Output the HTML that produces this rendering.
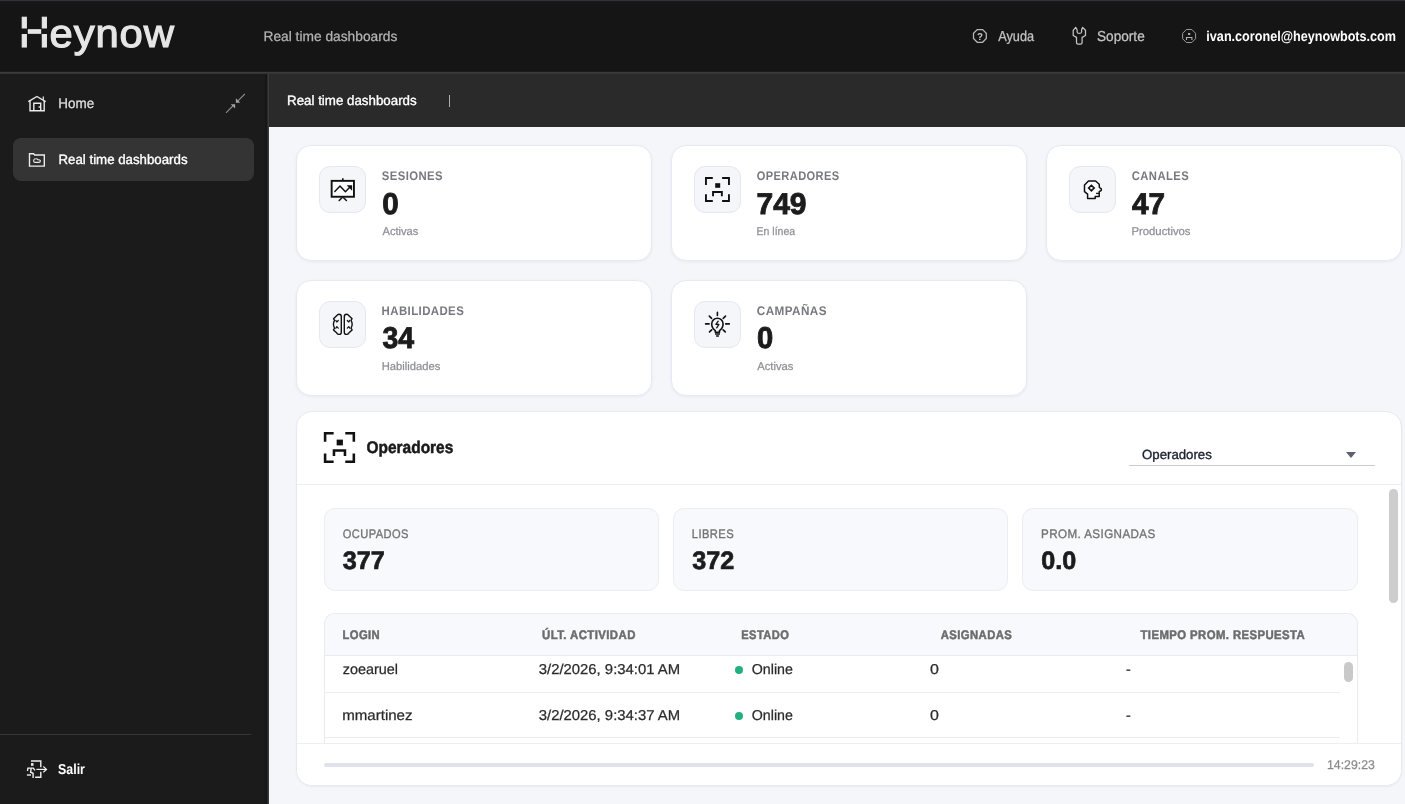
<!DOCTYPE html>
<html lang="es">
<head>
<meta charset="utf-8">
<title>Heynow - Real time dashboards</title>
<style>
*{box-sizing:border-box;margin:0;padding:0}
html,body{width:1405px;height:804px;overflow:hidden;background:#f5f6fa;font-family:"Liberation Sans",sans-serif}
.a,.t{position:absolute}
.t{white-space:nowrap;line-height:1;transform-origin:0 50%;text-rendering:geometricPrecision}
#page{position:absolute;left:0;top:0;width:1405px;height:804px;will-change:transform}
svg{position:absolute;overflow:visible}
#top{left:0;top:0;width:1405px;height:74px;background:#151515;border-top:1px solid #323136;box-shadow:inset 0 1px 0 #1c1b1f}
#topline{left:0;top:71px;width:1405px;height:3px;background:linear-gradient(to bottom,#1c1c1c 0,#1c1c1c 33%,#3b3b3b 34%,#3b3b3b 66%,#333 67%,#333 100%)}
#side{left:0;top:74px;width:269px;height:730px;background:#1b1b1b;border-right:1px solid #3a3a3a;box-shadow:inset -1px 0 0 #2a2a2a,inset -3px 0 0 #171717}
#tabs{left:269px;top:74px;width:1136px;height:52.700px;background:#2a2a2a}
.card{background:#fff;border:1px solid #e7e9f1;border-radius:15px;width:356px;height:116px;box-shadow:0 1px 3px rgba(30,30,60,.06)}
.ico{width:47px;height:47px;border-radius:11px;background:#f5f6fa;border:1px solid #e6e8f1}
#panel{left:296px;top:411px;width:1106px;height:375px;background:#fff;border:1px solid #e7e9f1;border-radius:16px;box-shadow:0 1px 2px rgba(30,30,60,.05)}
.mini{top:508px;width:335px;height:83px;background:#f8f9fc;border:1px solid #ebedf3;border-radius:11px}
.hl{height:1px;background:#eceef3}
.dot{width:8px;height:8px;border-radius:50%;background:#22b07d}
</style>
</head>
<body>
<div id="page">
<header class="a" id="top"></header><div class="a" id="topline"></div>
<span class="t" id="logo" style="left:18px;top:12px;font-size:39.6px;color:#e6e6e6;-webkit-text-stroke:1.1px currentColor;letter-spacing:.8px;transform:translate(0.86px,0.40px) scaleX(1.0573);"><span style="font-size:43.2px;display:inline-block;transform:scaleX(.945);transform-origin:0 50%;margin-right:-3px">H</span>eynow</span>
<span class="t" id="toptitle" style="left:263px;top:30px;font-size:13.8px;color:#b4b4b4;-webkit-text-stroke:.25px currentColor;transform:translate(0.50px,0.00px) scaleX(0.9970);">Real time dashboards</span>
<span class="t" id="ayuda" style="left:998px;top:29px;font-size:14.4px;color:#c4c4c4;-webkit-text-stroke:.25px currentColor;transform:translate(0.24px,0.90px) scaleX(0.8847);">Ayuda</span>
<span class="t" id="soporte" style="left:1097px;top:29px;font-size:14.4px;color:#c4c4c4;-webkit-text-stroke:.25px currentColor;transform:translate(0.03px,0.90px) scaleX(0.9462);">Soporte</span>
<span class="t" id="email" style="left:1206px;top:30px;font-size:14.2px;color:#ffffff;font-weight:700;transform:translate(0.35px,0.10px) scaleX(0.8894);">ivan.coronel@heynowbots.com</span>

<nav class="a" id="side"></nav>
<span class="t" id="home" style="left:58px;top:97px;font-size:13.9px;color:#e0e0e0;-webkit-text-stroke:.25px currentColor;transform:translate(0.28px,0.30px) scaleX(0.9679);">Home</span>
<div class="a" style="left:13.2px;top:137.8px;width:240.6px;height:43.1px;border-radius:8px;background:#343434"></div>
<span class="t" id="sidertd" style="left:58px;top:152px;font-size:13.5px;color:#ffffff;-webkit-text-stroke:.35px currentColor;transform:translate(0.52px,0.60px) scaleX(0.9823);">Real time dashboards</span>
<div class="a" style="left:0;top:733.8px;width:251px;height:1px;background:#353535"></div>
<span class="t" id="salir" style="left:58px;top:763px;font-size:14.4px;color:#ffffff;font-weight:700;transform:translate(0.05px,0.10px) scaleX(0.8603);">Salir</span>

<div class="a" id="tabs"></div>
<span class="t" id="tabrtd" style="left:287px;top:94px;font-size:13.5px;color:#ffffff;-webkit-text-stroke:.35px currentColor;transform:translate(0.01px,0.10px) scaleX(0.9873);">Real time dashboards</span>
<div class="a" style="left:448.6px;top:95px;width:1px;height:11.5px;background:#b0b0b0"></div>

<main>
<section class="a card" style="left:296px;top:145px"></section>
<div class="a ico" style="left:319px;top:166px"></div>
<span class="t" id="l1" style="left:381px;top:169px;font-size:12.5px;color:#78797f;font-weight:700;letter-spacing:.45px;transform:translate(0.79px,0.90px) scaleX(0.9057);">SESIONES</span><span class="t" id="n1" style="left:382px;top:189px;font-size:30.0px;color:#1c1c1c;font-weight:700;-webkit-text-stroke:.9px currentColor;transform:translate(0.25px,0.70px) scaleX(0.9869);">0</span><span class="t" id="s1" style="left:382px;top:227px;font-size:11.3px;color:#8e8f94;-webkit-text-stroke:.25px currentColor;transform:translate(0.50px,0.40px) scaleX(0.9848);">Activas</span>
<section class="a card" style="left:671px;top:145px"></section>
<div class="a ico" style="left:694px;top:166px"></div>
<span class="t" id="l2" style="left:756px;top:169px;font-size:12.5px;color:#78797f;font-weight:700;letter-spacing:.45px;transform:translate(0.78px,0.90px) scaleX(0.8862);">OPERADORES</span><span class="t" id="n2" style="left:756px;top:189px;font-size:30.0px;color:#1c1c1c;font-weight:700;-webkit-text-stroke:.9px currentColor;transform:translate(0.50px,0.70px) scaleX(0.9990);">749</span><span class="t" id="s2" style="left:756px;top:227px;font-size:11.3px;color:#8e8f94;-webkit-text-stroke:.25px currentColor;transform:translate(0.54px,0.40px) scaleX(0.9305);">En línea</span>
<section class="a card" style="left:1046px;top:145px"></section>
<div class="a ico" style="left:1069px;top:166px"></div>
<span class="t" id="l3" style="left:1131px;top:169px;font-size:12.5px;color:#78797f;font-weight:700;letter-spacing:.45px;transform:translate(0.78px,0.90px) scaleX(0.9008);">CANALES</span><span class="t" id="n3" style="left:1132px;top:189px;font-size:30.0px;color:#1c1c1c;font-weight:700;-webkit-text-stroke:.9px currentColor;transform:translate(0.00px,0.70px) scaleX(0.9879);">47</span><span class="t" id="s3" style="left:1131px;top:227px;font-size:11.3px;color:#8e8f94;-webkit-text-stroke:.25px currentColor;transform:translate(0.50px,0.40px) scaleX(1.0000);">Productivos</span>
<section class="a card" style="left:296px;top:280px"></section>
<div class="a ico" style="left:319px;top:301px"></div>
<span class="t" id="l4" style="left:381px;top:304px;font-size:12.5px;color:#78797f;font-weight:700;letter-spacing:.45px;transform:translate(0.56px,0.50px) scaleX(0.9144);">HABILIDADES</span><span class="t" id="n4" style="left:382px;top:324px;font-size:30.0px;color:#1c1c1c;font-weight:700;-webkit-text-stroke:.9px currentColor;transform:translate(0.51px,0.40px) scaleX(0.9482);">34</span><span class="t" id="s4" style="left:381px;top:362px;font-size:11.3px;color:#8e8f94;-webkit-text-stroke:.25px currentColor;transform:translate(0.75px,0.30px) scaleX(0.9931);">Habilidades</span>
<section class="a card" style="left:671px;top:280px"></section>
<div class="a ico" style="left:694px;top:301px"></div>
<span class="t" id="l5" style="left:756px;top:304px;font-size:12.5px;color:#78797f;font-weight:700;letter-spacing:.45px;transform:translate(0.77px,0.50px) scaleX(0.9376);">CAMPAÑAS</span><span class="t" id="n5" style="left:757px;top:324px;font-size:30.0px;color:#1c1c1c;font-weight:700;-webkit-text-stroke:.9px currentColor;transform:translate(0.00px,0.40px) scaleX(0.9739);">0</span><span class="t" id="s5" style="left:757px;top:362px;font-size:11.3px;color:#8e8f94;-webkit-text-stroke:.25px currentColor;transform:translate(0.25px,0.30px) scaleX(0.9931);">Activas</span>

<section class="a" id="panel"></section>
<span class="t" id="ptitle" style="left:366px;top:439px;font-size:17.0px;color:#1a1a1a;font-weight:700;-webkit-text-stroke:.5px currentColor;transform:translate(0.53px,0.00px) scaleX(0.9092);">Operadores</span>
<span class="t" id="ddl" style="left:1142px;top:448px;font-size:13.3px;color:#1c2030;-webkit-text-stroke:.35px currentColor;transform:translate(0.00px,0.10px) scaleX(0.9943);">Operadores</span>
<div class="a" style="left:1129px;top:465px;width:245.6px;height:1px;background:#cacdd8"></div>
<div class="a" style="left:1345.8px;top:452px;width:0;height:0;border-left:5.5px solid transparent;border-right:5.5px solid transparent;border-top:6px solid #5c6070"></div>
<div class="a hl" style="left:297px;top:484px;width:1104px"></div>
<div class="a" style="left:1389.2px;top:488.5px;width:8.7px;height:114.5px;border-radius:4.4px;background:#cdcdcd"></div>

<div class="a mini" style="left:324px"></div><span class="t" id="m1l" style="left:342px;top:527px;font-size:12.4px;color:#737373;-webkit-text-stroke:.35px currentColor;letter-spacing:.45px;transform:translate(0.78px,0.70px) scaleX(0.8972);">OCUPADOS</span><span class="t" id="m1n" style="left:342px;top:548px;font-size:25.2px;color:#1c1c1c;font-weight:700;-webkit-text-stroke:.7px currentColor;transform:translate(0.75px,0.80px) scaleX(1.0000);">377</span>
<div class="a mini" style="left:673px"></div><span class="t" id="m2l" style="left:691px;top:527px;font-size:12.4px;color:#737373;-webkit-text-stroke:.35px currentColor;letter-spacing:.45px;transform:translate(0.81px,0.70px) scaleX(0.9028);">LIBRES</span><span class="t" id="m2n" style="left:692px;top:548px;font-size:25.2px;color:#1c1c1c;font-weight:700;-webkit-text-stroke:.7px currentColor;transform:translate(0.25px,0.80px) scaleX(0.9988);">372</span>
<div class="a mini" style="left:1022px;width:336px"></div><span class="t" id="m3l" style="left:1041px;top:527px;font-size:12.4px;color:#737373;-webkit-text-stroke:.35px currentColor;letter-spacing:.45px;transform:translate(0.05px,0.70px) scaleX(0.9362);">PROM. ASIGNADAS</span><span class="t" id="m3n" style="left:1041px;top:548px;font-size:25.2px;color:#1c1c1c;font-weight:700;-webkit-text-stroke:.7px currentColor;transform:translate(0.25px,0.80px) scaleX(1.0001);">0.0</span>

<div class="a" style="left:324px;top:613px;width:1033.8px;height:131px;border:1px solid #e9ebf2;border-bottom:none;border-radius:11px 11px 0 0;background:#fff"></div>
<div class="a" style="left:325px;top:614px;width:1031.8px;height:41.5px;border-radius:10px 10px 0 0;background:#f8f9fc;border-bottom:1px solid #e9ebf2"></div>
<span class="t" id="h1" style="left:342px;top:628px;font-size:12.4px;color:#6c6c6c;font-weight:700;letter-spacing:.45px;-webkit-text-stroke:.5px currentColor;transform:translate(0.55px,0.70px) scaleX(0.9050);">LOGIN</span><span class="t" id="h2" style="left:542px;top:628px;font-size:12.4px;color:#6c6c6c;font-weight:700;letter-spacing:.45px;-webkit-text-stroke:.5px currentColor;transform:translate(0.03px,0.70px) scaleX(0.9193);">ÚLT. ACTIVIDAD</span><span class="t" id="h3" style="left:741px;top:628px;font-size:12.4px;color:#6c6c6c;font-weight:700;letter-spacing:.45px;-webkit-text-stroke:.5px currentColor;transform:translate(0.31px,0.70px) scaleX(0.8967);">ESTADO</span><span class="t" id="h4" style="left:940px;top:628px;font-size:12.4px;color:#6c6c6c;font-weight:700;letter-spacing:.45px;-webkit-text-stroke:.5px currentColor;transform:translate(0.74px,0.70px) scaleX(0.9115);">ASIGNADAS</span><span class="t" id="h5" style="left:1140px;top:628px;font-size:12.4px;color:#6c6c6c;font-weight:700;letter-spacing:.45px;-webkit-text-stroke:.5px currentColor;transform:translate(0.48px,0.70px) scaleX(0.9164);">TIEMPO PROM. RESPUESTA</span>
<span class="t" id="r1a" style="left:342px;top:663px;font-size:14.3px;color:#2b2b2b;-webkit-text-stroke:.25px currentColor;transform:translate(0.75px,0.30px) scaleX(1.0083);">zoearuel</span><span class="t" id="r1b" style="left:538px;top:663px;font-size:14.3px;color:#2b2b2b;-webkit-text-stroke:.25px currentColor;transform:translate(0.74px,0.20px) scaleX(1.0397);">3/2/2026, 9:34:01 AM</span><div class="a dot" style="left:734.7px;top:666.3px"></div><span class="t" id="r1c" style="left:751px;top:663px;font-size:14.3px;color:#2b2b2b;-webkit-text-stroke:.25px currentColor;transform:translate(0.75px,0.20px) scaleX(0.9951);">Online</span><span class="t" id="r1d" style="left:929px;top:663px;font-size:14.3px;color:#2b2b2b;-webkit-text-stroke:.25px currentColor;transform:translate(0.97px,0.30px) scaleX(1.1181);">0</span><span class="t" id="r1e" style="left:1125px;top:663px;font-size:14.3px;color:#2b2b2b;-webkit-text-stroke:.25px currentColor;transform:translate(0.99px,0.30px) scaleX(0.9929);">-</span>
<div class="a hl" style="left:325px;top:691.8px;width:1014.8px"></div>
<span class="t" id="r2a" style="left:342px;top:708px;font-size:14.3px;color:#2b2b2b;-webkit-text-stroke:.25px currentColor;transform:translate(0.22px,0.70px) scaleX(1.0534);">mmartinez</span><span class="t" id="r2b" style="left:538px;top:708px;font-size:14.3px;color:#2b2b2b;-webkit-text-stroke:.25px currentColor;transform:translate(0.74px,0.60px) scaleX(1.0397);">3/2/2026, 9:34:37 AM</span><div class="a dot" style="left:734.7px;top:711.7px"></div><span class="t" id="r2c" style="left:751px;top:708px;font-size:14.3px;color:#2b2b2b;-webkit-text-stroke:.25px currentColor;transform:translate(0.75px,0.60px) scaleX(0.9951);">Online</span><span class="t" id="r2d" style="left:929px;top:708px;font-size:14.3px;color:#2b2b2b;-webkit-text-stroke:.25px currentColor;transform:translate(0.97px,0.70px) scaleX(1.1181);">0</span><span class="t" id="r2e" style="left:1125px;top:708px;font-size:14.3px;color:#2b2b2b;-webkit-text-stroke:.25px currentColor;transform:translate(0.99px,0.70px) scaleX(0.9929);">-</span>
<div class="a hl" style="left:325px;top:737px;width:1014.8px"></div>
<div class="a" style="left:1344.2px;top:662px;width:9.1px;height:20.2px;border-radius:4.5px;background:#c9c9c9"></div>
<div class="a" style="left:297px;top:743px;width:1104px;height:42px;background:#fff;border-top:1px solid #eceef3;border-radius:0 0 15px 15px"></div>
<div class="a" style="left:324.2px;top:762.8px;width:989.7px;height:4.2px;border-radius:2.1px;background:#dfe2eb"></div>
<span class="t" id="clock" style="left:1327px;top:759px;font-size:12.6px;color:#8a8a8a;-webkit-text-stroke:.25px currentColor;transform:translate(0.02px,0.10px) scaleX(0.9749);">14:29:23</span>
</main>
<svg width="1405" height="804" viewBox="0 0 1405 804" style="left:0;top:0" fill="none" stroke-linecap="butt" stroke-linejoin="miter">
<!-- logo H notches -->
<g fill="#151515" stroke="none"><rect x="20.800" y="28.500" width="7" height="5.500"/><rect x="41.200" y="28.500" width="7" height="5.500"/></g>
<!-- help -->
<g stroke="#b8b8b8" stroke-width="1.25">
<path d="M977.25 29.5h5.3l3.75 3.75v5.3l-3.75 3.75h-5.3l-3.75-3.75v-5.3z"/>
</g>
<!-- wrench -->
<path stroke="#c6c6c6" stroke-width="1.25" stroke-linejoin="round" d="M1075.7 27.4L1073.2 30.3V35.5L1076.5 37.4V42.6Q1076.5 44.2 1078.1 44.2H1080.5Q1082.1 44.2 1082.1 42.6V37.4L1085.5 35.5V30.3L1082.6 27.4L1081.6 29.8V32Q1081.4 33.4 1079.3 33.4Q1077.3 33.4 1077.1 32V29.8Z"/>
<!-- user -->
<g stroke="#9c9c9c" stroke-width="1">
<path d="M1186.4 29.5h5.4l3.8 3.8v5.4l-3.8 3.800h-5.4l-3.8-3.8v-5.4z"/>
<path d="M1186.5 40V37.500H1191.900V40" stroke-width="1.1" stroke="#b0b0b0"/>
<rect x="1188.100" y="33" width="2.100" height="2" fill="#b0b0b0" stroke="none"/>
</g>
<!-- home -->
<g stroke="#ececec" stroke-width="1.4">
<path d="M28.300 101.700L36.900 96.500L45.700 101.700" stroke-linejoin="round"/>
<path d="M30 101V110.800H44.200V101"/>
<path d="M33.800 110.800V103.300H40.700V110.800"/>
<path d="M43.300 96.400V99.800" stroke-width="1.200"/>
<rect x="38.600" y="106.300" width="1.400" height="1.400" fill="#ececec" stroke="none"/>
</g>
<!-- collapse -->
<g stroke="#8c8c8c" stroke-width="1.100">
<path d="M244.800 94L238 100.800"/><path d="M226 112.800L232.800 106"/>
<path d="M235.900 98.300V102.700H240.200Z" fill="#a4a4a4" stroke="none"/>
<path d="M230.700 104.200H235.100V108.600Z" fill="#a4a4a4" stroke="none"/>
</g>
<!-- folder -->
<g stroke="#ececec" stroke-width="1.400">
<path d="M29.500 153.700H33.600L34.700 155H44.300V166.100H29.500Z" fill="#2c2c2c"/>
<path d="M35 162.400Q33.400 162.200 33.600 160.500Q33.900 158.800 35.600 158.800Q37.300 158.600 37.800 159.800Q40.300 159.600 40.400 161.100Q40.400 162.400 38.800 162.400Z" stroke-width="1.100" stroke-linejoin="round"/>
</g>
<!-- exit -->
<g stroke="#f0f0f0" stroke-width="1.400">
<path d="M31 761H40.800V767.200"/><path d="M40.800 771.800V777.200H35.100"/>
<path d="M36.400 769.400H46.200" stroke-width="1.200"/><path d="M43.300 766.500L46.500 769.400L43.300 772.300" stroke-width="1.200"/>
<rect x="31" y="763.100" width="2.500" height="2.700" fill="#f0f0f0" stroke="none"/>
<path d="M27.500 771L27.900 768.100H33.300L35 770.400"/>
<path d="M31.200 768.100L30.600 772.200L33.100 773.300V777.900"/>
<path d="M26.900 775H31"/>
</g>
<!-- presentation -->
<g stroke="#111" stroke-width="1.900">
<rect x="331.650" y="180.850" width="22.300" height="15.900" fill="#fbfbfd"/>
<path d="M342.800 178.200V180.500" stroke-width="1.600"/>
<path d="M342 197.700L339.200 200.500M343.600 197.700L346.400 200.500" stroke-width="1.500" stroke-linecap="round"/>
<path d="M334.800 191.600L340 186L345.400 191.700L349.500 187.500" stroke-width="1.400" stroke-linecap="round" stroke-linejoin="round"/>
<path d="M346.600 185.300H352.100V190.700Z" fill="#111" stroke="none"/>
</g>
<!-- face small (card 2) -->
<g id="face" transform="translate(705 177.100)" stroke="#111" stroke-width="1.900">
<path d="M.95 7.800V.95H7.800M17.100 .95H23.950V7.800M.95 17.100V23.850H7.800M23.950 17.100V23.850H17.100"/>
<path d="M8.050 19.200V14.850H16.850V19.200"/>
<rect x="10.200" y="6.100" width="5" height="4.600" fill="#111" stroke="none"/>
</g>
<!-- head (card 3) -->
<g stroke="#111" stroke-width="1.500" stroke-linejoin="round">
<path fill="#fbfbfd" d="M1088.500 181H1095.600L1099.200 184.200L1099.400 187.500L1101.300 188.900V190.300L1099.200 191.700V196.500H1095.200V198.400H1087.600V194.100L1084.500 191.700V185.100Z"/>
<path d="M1096.100 193.400H1099.200" stroke-width="1.300"/>
<path d="M1091.400 184.200L1095.300 188.100L1091.400 192L1087.500 188.100Z" fill="#111" stroke="none"/>
<rect x="1090.300" y="187" width="2.200" height="2.200" fill="#fafafc" stroke="none"/>
</g>
<!-- brain (card 4) -->
<g stroke="#111" stroke-width="1.400" stroke-linejoin="round" stroke-linecap="round">
<path d="M341.300 316.500Q341.300 314.300 339 314.300Q337.600 314.300 336.600 315.800L333.500 318.700L334.600 320.400Q332.200 324.300 334.600 328.200L333.500 329.900L336.600 332.800Q337.600 334.400 339 334.400Q341.300 334.400 341.300 332.200Z"/>
<path d="M344.300 316.500Q344.300 314.300 346.600 314.300Q348 314.300 349 315.800L352.100 318.700L351 320.400Q353.400 324.300 351 328.200L352.100 329.900L349 332.800Q348 334.400 346.600 334.400Q344.300 334.400 344.300 332.200Z"/>
<path d="M335.800 320.400L336.800 322L338.300 320.500M335.800 328.200L336.800 326.600L338.300 328.100M349.800 320.400L348.800 322L347.300 320.500M349.800 328.200L348.800 326.600L347.300 328.100" stroke-width="1.200"/>
</g>
<!-- bulb (card 5) -->
<g stroke="#111" stroke-width="1.600" stroke-linecap="round" stroke-linejoin="round">
<path d="M715.300 332.300V330.600Q711.700 327.900 711.700 323.900A5.700 5.700 0 0 1 723.100 323.900Q723.100 327.900 719.500 330.600V332.300Z" stroke-linecap="butt"/>
<path d="M715 334.100H720M716.100 335.900H718.900" stroke-width="1.500" stroke-linecap="butt"/>
<path d="M717.400 312.400V315.400M705.600 323.900H709.100M725.700 323.900H729.300M709.300 316.100L711.600 318.300M725.500 316.100L723.200 318.300M709.500 331.900L711.700 329.800M725.300 331.900L723.100 329.800"/>
<path d="M718.200 321.200L715.900 324.400H718.900L716.700 327.900" stroke-width="1.300"/>
</g>
<!-- face big (panel) -->
<g transform="translate(323.900 432) scale(1.250)" stroke="#111" stroke-width="2.050">
<path d="M.95 7.800V.95H7.800M17.100 .95H23.950V7.800M.95 17.100V23.850H7.800M23.950 17.100V23.850H17.100"/>
<path d="M8.050 19.200V14.850H16.850V19.200"/>
<rect x="10.200" y="6.100" width="5" height="4.600" fill="#111" stroke="none"/>
</g>
</svg>
<span class="t" id="qm" style="left:976px;top:33px;font-size:10.0px;color:#c4c4c4;font-weight:700;transform:translate(1.00px,0.10px) scaleX(0.9733);">?</span>

</div>
</body>
</html>
